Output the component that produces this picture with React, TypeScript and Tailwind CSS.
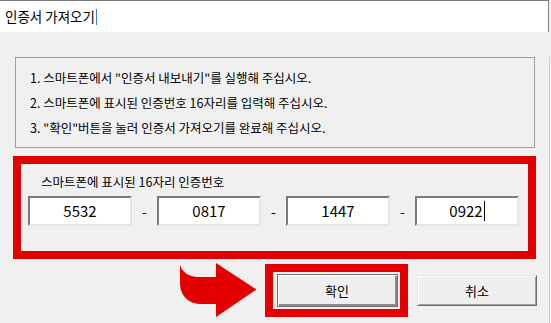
import React from 'react';

const font = { fontFamily: '"Noto Sans CJK KR", "Noto Sans", sans-serif' };

const codes = ['5532', '0817', '1447', '0922'];

function CodeInput({ value, caret }: { value: string; caret?: boolean }) {
  return (
    <div className="w-[104px] h-[30px] bg-white border-2 border-t-[#7a7a7a] border-l-[#7a7a7a] border-b-[#e6e6e6] border-r-[#e6e6e6] flex items-center justify-center text-[15px] text-black">
      <span>{value}</span>
      {caret && <span className="w-px h-[20px] bg-black ml-px" />}
    </div>
  );
}

export default function App() {
  return (
    <div className="w-[551px] h-[323px] bg-[#f0f0f0] overflow-hidden" style={font}>
      {/* title bar */}
      <div className="w-[549px] h-[32px] bg-white border-t border-r border-[#7b7b7b] flex items-center pl-[5px]">
        <span className="text-[13.5px] text-black leading-none">인증서 가져오기</span>
        <span className="w-px h-[16px] bg-[#2f7fd8] ml-[1px]" />
      </div>

      <div className="w-[550px] h-[291px] border-r border-[#cfcfcf]">
        {/* instructions */}
        <div className="ml-[15px] mt-[25px] w-[520px] h-[91px] border border-[#a0a0a0] pl-[14px] pt-[7px] text-[12.5px] text-black leading-[25px]">
          <p>1. 스마트폰에서 "인증서 내보내기"를 실행해 주십시오.</p>
          <p>2. 스마트폰에 표시된 인증번호 16자리를 입력해 주십시오.</p>
          <p>3. "확인"버튼을 눌러 인증서 가져오기를 완료해 주십시오.</p>
        </div>

        {/* code entry */}
        <div className="ml-[13px] mt-[8px] w-[523px] h-[103px] border-[8px] border-[#e30000] pl-[7px] pt-[10px]">
          <p className="pl-[13px] text-[12.5px] leading-[16px] text-black">스마트폰에 표시된 16자리 인증번호</p>
          <div className="mt-[6px] flex items-center">
            {codes.map((c, i) => (
              <React.Fragment key={c}>
                {i > 0 && <span className="w-[25px] text-center text-[14px] text-black">-</span>}
                <CodeInput value={c} caret={i === 3} />
              </React.Fragment>
            ))}
          </div>
        </div>

        {/* buttons */}
        <div className="flex items-start pt-[4px]">
          <svg width="77" height="55" viewBox="0 0 77 55" className="ml-[180px] shrink-0">
            <path
              d="M0 2 C2 9 9 14 18 14 L36 14 L36 0 L76.5 26.5 L36 54 L36 41 L21 41 C8 41 0 32 0 20 Z"
              fill="#e30000"
            />
          </svg>
          <div className="ml-[8px] mt-[1px] w-[143px] h-[53px] border-[8px] border-[#e30000] flex items-center justify-center pl-[1px]">
            <button className="w-[121px] h-[33px] bg-[#efefef] border border-[#6e6e6e] shadow-[inset_1px_1px_0_#ffffff,inset_-2px_-2px_0_#8a8a8a] text-[13px] text-black">
              확인
            </button>
          </div>
          <button className="ml-[9px] mt-[12px] w-[120px] h-[31px] bg-[#efefef] border border-t-[#e3e3e3] border-l-[#e3e3e3] border-b-[#6e6e6e] border-r-[#6e6e6e] shadow-[inset_1px_1px_0_#ffffff,inset_-1px_-1px_0_#a0a0a0] text-[13px] text-black">
            취소
          </button>
        </div>
      </div>
    </div>
  );
}
